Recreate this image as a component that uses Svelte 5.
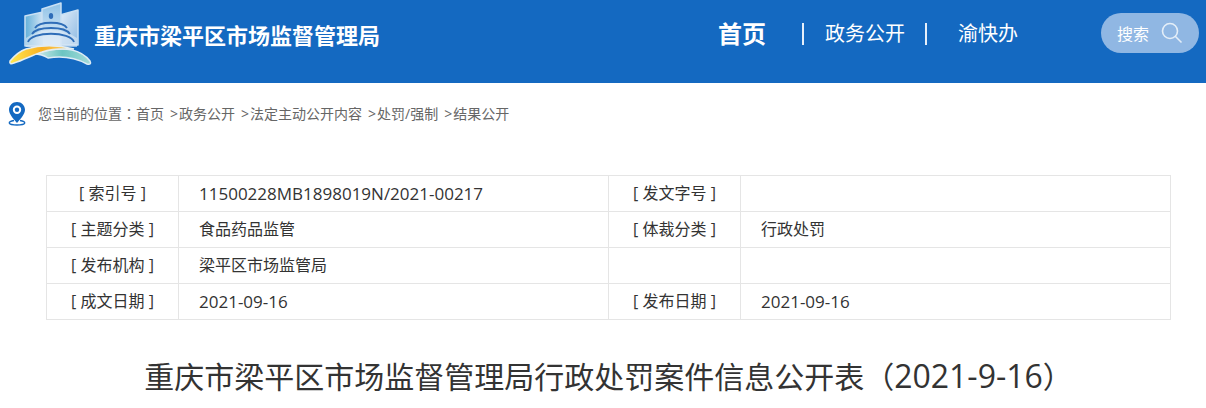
<script>
    const nav = ["首页", "政务公开", "渝快办"];
    const crumbs = ["首页", "政务公开", "法定主动公开内容", "处罚/强制", "结果公开"];

    // label, value, label, value
    const rows = [
        ["[ 索引号 ]", "11500228MB1898019N/2021-00217", "[ 发文字号 ]", ""],
        ["[ 主题分类 ]", "食品药品监管", "[ 体裁分类 ]", "行政处罚"],
        ["[ 发布机构 ]", "梁平区市场监管局", "", ""],
        ["[ 成文日期 ]", "2021-09-16", "[ 发布日期 ]", "2021-09-16"],
    ];

    const isLatin = (text) => /^[\w\/-]+$/.test(text);
</script>

<header>
    <a class="brand" href="/">
        <svg class="logo" width="84" height="66" viewBox="0 0 84 66" aria-hidden="true">
            <defs>
                <linearGradient id="left" x1="0" y1="0" x2="1" y2="0">
                    <stop offset="0" stop-color="#62afd9"/>
                    <stop offset="1" stop-color="#d3e5f5"/>
                </linearGradient>
                <linearGradient id="mid" x1="0" y1="0" x2="0" y2="1">
                    <stop offset="0" stop-color="#8fc2e6"/>
                    <stop offset="1" stop-color="#e4effa"/>
                </linearGradient>
                <linearGradient id="right" x1="0" y1="0" x2="1" y2="1">
                    <stop offset="0" stop-color="#e2edf9"/>
                    <stop offset="1" stop-color="#8fbbe3"/>
                </linearGradient>
                <linearGradient id="gold" x1="0" y1="0" x2="1" y2="0">
                    <stop offset="0" stop-color="#ffe84f"/>
                    <stop offset="0.5" stop-color="#f9b024"/>
                    <stop offset="1" stop-color="#fbd578"/>
                </linearGradient>
                <linearGradient id="teal" x1="0" y1="0" x2="1" y2="0">
                    <stop offset="0" stop-color="#d5ecec"/>
                    <stop offset="0.5" stop-color="#6cc5c2"/>
                    <stop offset="1" stop-color="#a4dbd9"/>
                </linearGradient>
            </defs>
            <g stroke="#c9e0f4" stroke-width="1.5" stroke-linejoin="round">
                <path d="M17 14 35 10V44H17Z" fill="url(#left)"/>
                <path d="M52 13 70 8V43H52Z" fill="url(#right)"/>
                <path d="M34 7 53 1V44H34Z" fill="url(#mid)"/>
            </g>
            <path d="M18 36Q43 20 69 36V45H18Z" fill="#dce9f6" opacity="0.6"/>
            <g fill="none" stroke="#2e6db8" stroke-width="1.8">
                <path d="M27 26C31 19 55 19 59 26"/>
                <path d="M24 32C29 24 57 24 62 32"/>
                <path d="M20 40C23 29 63 29 66 40"/>
            </g>
            <ellipse cx="43" cy="14" rx="2.2" ry="3" fill="#2e6db8"/>
            <path d="M26 52C45 47 54 46 64 48 73 50 78 54 82 59Q84 63 79 62C66 55 52 54 40 56Q34 52 26 52Z" fill="url(#teal)" stroke="#dcebf6" stroke-width="1.5"/>
            <path d="M2 59C8 52 12 49 18 47 32 43 50 43 66 47 50 46 40 48 34 50 24 53 16 58 6 61Q1 63 2 59Z" fill="url(#gold)" stroke="#e4edf0" stroke-width="1.5"/>
        </svg>
        <span>重庆市梁平区市场监督管理局</span>
    </a>
    <nav>
        {#each nav as item, i}
            <a href="/" class:active={i === 0}>{item}</a>
        {/each}
    </nav>
    <button class="search">
        搜索
        <svg width="22" height="22" viewBox="0 0 22 22" fill="none" stroke="#e4eef8" stroke-width="1.6" aria-hidden="true">
            <circle cx="9" cy="9" r="7.5"/>
            <path d="M14 14 20.5 20.5"/>
        </svg>
    </button>
</header>

<div class="crumbs">
    <svg width="18" height="24" viewBox="0 0 18 24" aria-hidden="true">
        <path d="M6 18.5C-1 19.5-.5 23 9 23S19 19.5 12 18.5" fill="none" stroke="#1469c1" stroke-width="1.3"/>
        <path fill-rule="evenodd" d="M9 0C4.5 0 1 3.4 1 7.8 1 12 5 16.5 9 21 13 16.5 17 12 17 7.8 17 3.4 13.5 0 9 0ZM9 3.5A4.2 4.2 0 1 1 9 11.9 4.2 4.2 0 1 1 9 3.5Z" fill="#1469c1"/>
        <circle cx="9" cy="7.7" r="2.2" fill="#1469c1"/>
    </svg>
    <span>您当前的位置<span class="colon">：</span></span>
    {#each crumbs as crumb, i}
        {#if i > 0}<span class="arrow">&gt;</span>{/if}
        <a href="/">{crumb}</a>
    {/each}
</div>

<main>
    <table>
        <tbody>
            {#each rows as row}
                <tr>
                    {#each row as cell, i}
                        {#if i % 2 === 0}
                            <th>{cell}</th>
                        {:else}
                            <td class:latin={isLatin(cell)}>{cell}</td>
                        {/if}
                    {/each}
                </tr>
            {/each}
        </tbody>
    </table>
    <h1>重庆市梁平区市场监督管理局行政处罚案件信息公开表（<span>2021-9-16</span>）</h1>
</main>

<style>
    :global(body) {
        background: #fff;
        color: #333;
        font-family: "Open Sans", "Noto Sans CJK SC", sans-serif;
    }

    a {
        color: inherit;
        text-decoration: none;
    }

    header {
        display: flex;
        align-items: flex-start;
        height: 83px;
        padding: 0 7px 0 8px;
        background: #1469c1;
        color: #fff;
    }

    .brand {
        display: flex;
        gap: 2px;
        font-size: 22px;
        font-weight: bold;
        line-height: 32px;
        white-space: nowrap;
    }

    .brand span {
        padding-top: 19px;
    }

    .logo {
        margin-top: 2px;
    }

    nav {
        display: flex;
        align-items: center;
        margin: 18px 83px 0 auto;
        font-size: 20px;
        line-height: 32px;
        white-space: nowrap;
    }

    nav a + a {
        display: flex;
        align-items: center;
    }

    nav a + a::before {
        content: "";
        width: 2px;
        height: 22px;
        margin-right: 21px;
        background: #e6effa;
    }

    nav a:nth-child(2) {
        margin: 0 20px 0 36px;
    }

    nav a:last-child::before {
        margin-right: 31px;
    }

    .active {
        font-size: 24px;
        font-weight: bold;
    }

    .search {
        display: flex;
        align-items: center;
        justify-content: space-between;
        width: 98px;
        height: 40px;
        margin-top: 13px;
        padding: 0 16px;
        border: 0;
        border-radius: 20px;
        background: #90b7e3;
        color: #fff;
        font: inherit;
        font-size: 16px;
        white-space: nowrap;
    }

    .crumbs {
        display: flex;
        align-items: center;
        padding: 18px 8px 0;
        font-size: 14px;
        line-height: 24px;
        color: #666;
    }

    .crumbs svg {
        margin-right: 12px;
    }

    .colon {
        font-family: "Noto Sans CJK TC", sans-serif;
    }

    .arrow {
        margin: 0 1px 0 6px;
    }

    main {
        padding: 49px 35px 0 46px;
    }

    table {
        width: 100%;
        border-collapse: collapse;
        table-layout: fixed;
        font-size: 16px;
        line-height: 35px;
    }

    th, td {
        height: 35px;
        padding: 0;
        border: 1px solid #e5e5e5;
    }

    th {
        width: 131px;
        font-weight: normal;
    }

    td {
        padding-left: 20px;
    }

    .latin {
        font-size: 17px;
    }

    h1 {
        margin: 34px 0 0;
        font-size: 30px;
        font-weight: normal;
        line-height: 44px;
        text-align: center;
    }

    h1 span {
        font-size: 32px;
    }
</style>
